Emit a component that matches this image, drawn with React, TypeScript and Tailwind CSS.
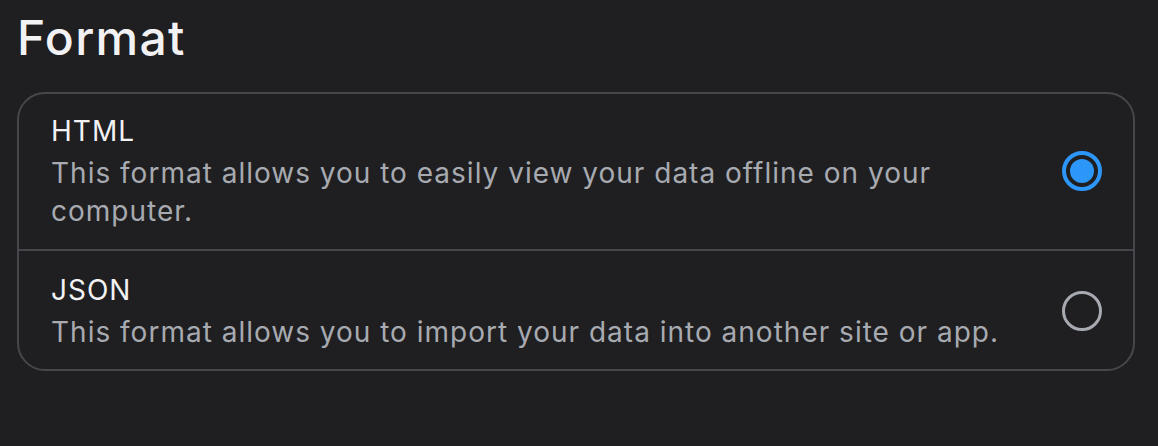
import { useState } from "react";

type Option = {
  id: string;
  label: string;
  description: string;
};

const OPTIONS: Option[] = [
  {
    id: "html",
    label: "HTML",
    description: "This format allows you to easily view your data offline on your computer."
  },
  {
    id: "json",
    label: "JSON",
    description: "This format allows you to import your data into another site or app."
  }
];

function Radio({ checked }: { checked: boolean }) {
  if (checked) {
    return (
      <span className="flex h-10 w-10 shrink-0 items-center justify-center rounded-full border-4 border-[#2d96f9]">
        <span className="h-6 w-6 rounded-full bg-[#2d96f9]" />
      </span>
    );
  }
  return <span className="h-10 w-10 shrink-0 rounded-full border-[3.5px] border-[#a7aab0]" />;
}

export default function App() {
  const [selected, setSelected] = useState("html");

  return (
    <div className="min-h-[446px] w-full bg-[#1f1f21] px-[17px] pt-[8px] font-['Inter',sans-serif]">
      <h1 className="text-[48px] leading-[60px] font-medium tracking-[1.3px] text-[#f2f2f4]">Format</h1>
      <div className="mt-[24px] w-[1118px] overflow-hidden rounded-[28px] border-2 border-[#45474c]">
        {OPTIONS.map((option, i) => (
          <button
            key={option.id}
            type="button"
            onClick={() => setSelected(option.id)}
            className={
              "flex w-full items-center justify-between gap-6 pl-[32px] pr-[31px] text-left " +
              (i > 0 ? "border-t-2 border-[#45474c] pt-[20px] pb-[18px]" : "pt-[18px] pb-[19px]")
            }
          >
            <div className="max-w-[960px]">
              <p className="text-[28px] leading-[38px] tracking-[1px] text-[#f2f2f4]">{option.label}</p>
              <p className="mt-[4px] text-[28px] leading-[38px] tracking-[1px] text-[#a7aab0]">
                {option.description}
              </p>
            </div>
            <Radio checked={selected === option.id} />
          </button>
        ))}
      </div>
    </div>
  );
}
